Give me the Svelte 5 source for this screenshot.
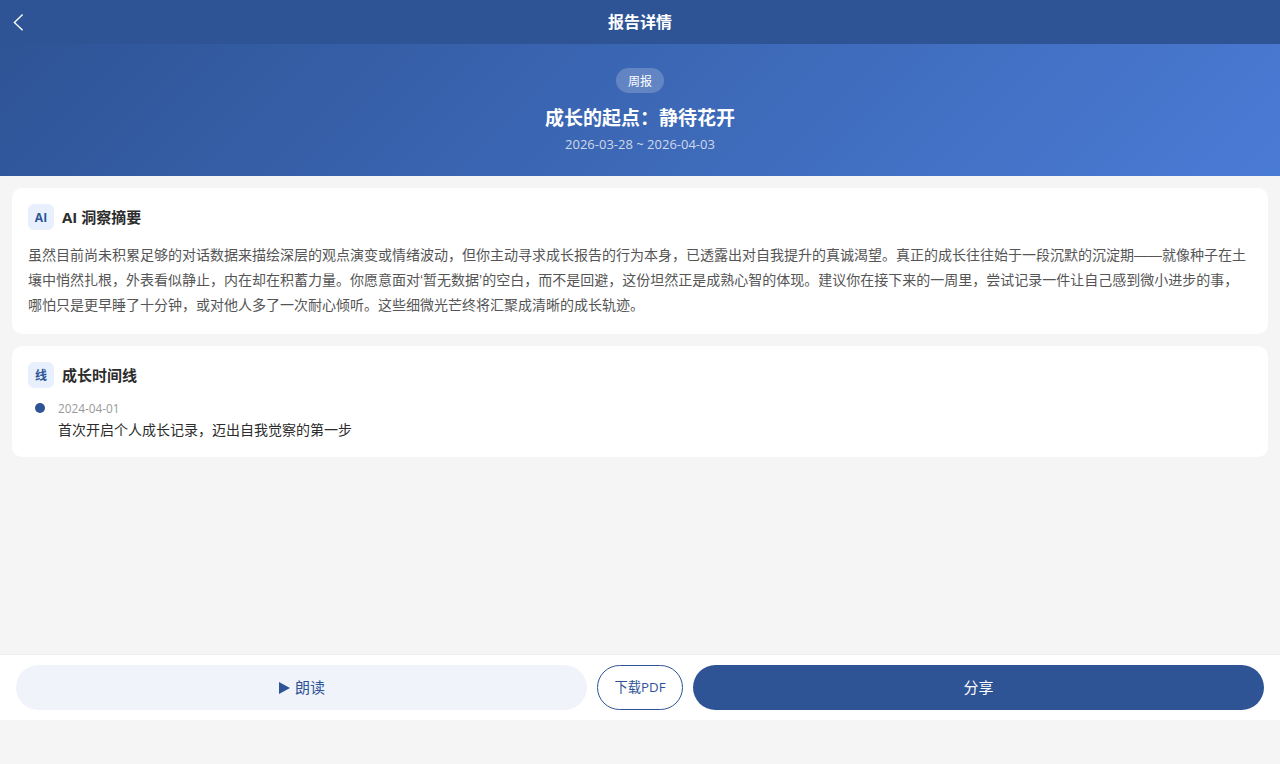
<script lang="ts">
  interface TimelineItem {
    date: string;
    text: string;
  }

  const report = {
    type: '周报',
    title: '成长的起点：静待花开',
    start: '2026-03-28',
    end: '2026-04-03',
    summary:
      '虽然目前尚未积累足够的对话数据来描绘深层的观点演变或情绪波动，但你主动寻求成长报告的行为本身，已透露出对自我提升的真诚渴望。真正的成长往往始于一段沉默的沉淀期——就像种子在土壤中悄然扎根，外表看似静止，内在却在积蓄力量。你愿意面对‘暂无数据’的空白，而不是回避，这份坦然正是成熟心智的体现。建议你在接下来的一周里，尝试记录一件让自己感到微小进步的事，哪怕只是更早睡了十分钟，或对他人多了一次耐心倾听。这些细微光芒终将汇聚成清晰的成长轨迹。'
  };

  const timeline: TimelineItem[] = [
    { date: '2024-04-01', text: '首次开启个人成长记录，迈出自我觉察的第一步' }
  ];
</script>

<div class="page">
  <header class="navbar">
    <button class="back" aria-label="返回">
      <svg width="12" height="18" viewBox="0 0 12 18">
        <path d="M10.6 1.6 2.4 9.4l8.2 7.8" />
      </svg>
    </button>
    <h1>报告详情</h1>
  </header>

  <section class="hero">
    <span class="badge">{report.type}</span>
    <h2>{report.title}</h2>
    <p class="range">{report.start} ~ {report.end}</p>
  </section>

  <main>
    <section class="card">
      <div class="card-head">
        <span class="tag">AI</span>
        <h3>AI 洞察摘要</h3>
      </div>
      <p class="summary">{report.summary}</p>
    </section>

    <section class="card">
      <div class="card-head">
        <span class="tag">线</span>
        <h3>成长时间线</h3>
      </div>
      {#each timeline as item}
        <div class="timeline-item">
          <span class="dot"></span>
          <div>
            <p class="date">{item.date}</p>
            <p class="event">{item.text}</p>
          </div>
        </div>
      {/each}
    </section>
  </main>

  <footer class="actions">
    <button class="read">
      <svg width="11" height="12" viewBox="0 0 11 12"><path d="M0 0v12l11-6z" /></svg>
      朗读
    </button>
    <button class="download">下载PDF</button>
    <button class="share">分享</button>
  </footer>
</div>

<style>
  :global(body) {
    background: #f5f5f5;
  }

  .page {
    display: flex;
    flex-direction: column;
    height: 720px;
    font-family: 'Open Sans', 'Noto Sans CJK SC', sans-serif;
    color: #2c2c2c;
  }

  h1,
  h2,
  h3,
  p {
    margin: 0;
  }

  button {
    padding: 0;
    border: none;
    background: none;
    font-family: inherit;
    cursor: pointer;
  }

  .navbar {
    display: grid;
    grid-template-columns: 36px 1fr 36px;
    align-items: center;
    height: 44px;
    background: #2e5496;
    color: #fff;
  }

  .back {
    display: flex;
    padding-left: 12px;
  }

  .back path {
    fill: none;
    stroke: #fff;
    stroke-width: 1.4;
  }

  .navbar h1 {
    font-size: 16px;
    line-height: 22px;
    font-weight: 700;
    text-align: center;
  }

  .hero {
    display: flex;
    flex-direction: column;
    align-items: center;
    box-sizing: border-box;
    height: 132px;
    padding-top: 24px;
    background: linear-gradient(135deg, #2e5496 0%, #4a7bd5 100%);
    color: #fff;
  }

  .badge {
    padding: 5px 12px 3px;
    border-radius: 13px;
    background: rgba(255, 255, 255, 0.2);
    font-size: 12px;
    line-height: 17px;
  }

  .hero h2 {
    margin-top: 12px;
    font-size: 19px;
    line-height: 27px;
    font-weight: 700;
  }

  .range {
    margin-top: 4px;
    font-size: 13px;
    line-height: 17px;
    color: rgba(255, 255, 255, 0.75);
  }

  main {
    display: flex;
    flex: 1;
    flex-direction: column;
    gap: 12px;
    padding: 12px;
  }

  .card {
    padding: 16px;
    border-radius: 10px;
    background: #fff;
  }

  .card-head {
    display: flex;
    align-items: center;
    gap: 8px;
    margin-bottom: 12px;
  }

  .tag {
    width: 26px;
    height: 26px;
    border-radius: 6px;
    background: #e8effd;
    color: #2e5496;
    font-size: 12px;
    line-height: 27px;
    font-weight: 700;
    text-align: center;
  }

  .card-head h3 {
    font-size: 15px;
    line-height: 22px;
    font-weight: 700;
  }

  /* Liberation Sans keeps the quotes narrow and joins the double dash */
  .summary {
    margin-bottom: -1px;
    padding: 1px 4px 0 0;
    font-family: 'Liberation Sans', 'Noto Sans CJK SC', sans-serif;
    font-size: 14px;
    line-height: 25.2px;
    color: #555;
  }

  .timeline-item {
    display: flex;
    gap: 13px;
    padding-left: 7px;
  }

  .dot {
    width: 10px;
    height: 10px;
    margin-top: 3px;
    border-radius: 50%;
    background: #2e5496;
  }

  .date {
    font-size: 11.8px;
    line-height: 17px;
    color: #999;
  }

  .event {
    margin: 2px 0 1px;
    font-size: 14px;
    line-height: 21px;
  }

  .actions {
    display: flex;
    gap: 10px;
    padding: 10px 16px;
    border-top: 1px solid #eee;
    background: #fff;
  }

  .actions button {
    height: 45px;
    padding-bottom: 2px;
    border-radius: 22.5px;
    font-size: 15px;
  }

  .actions .read {
    display: flex;
    flex: 1;
    align-items: center;
    justify-content: center;
    gap: 5px;
    background: #f0f3fa;
    color: #2e5496;
  }

  .read svg {
    margin: 2px 0 0 1px;
  }

  .read path {
    fill: #2e5496;
  }

  .actions .download {
    width: 86px;
    border: 1px solid #2e5496;
    color: #2e5496;
    font-size: 13.3px;
  }

  .actions .share {
    flex: 1;
    background: #2e5496;
    color: #fff;
  }
</style>
